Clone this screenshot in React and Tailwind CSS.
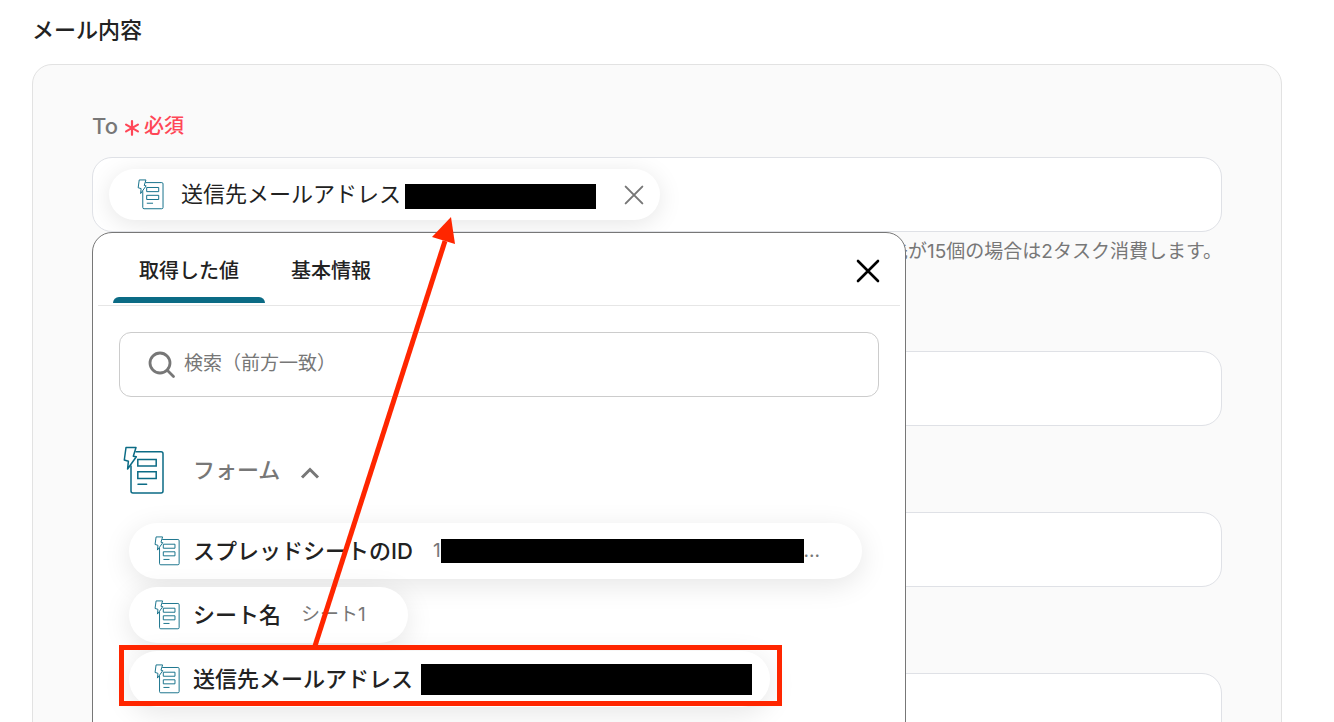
import clsx from 'clsx'

const items = [
  { name: 'スプレッドシートのID', value: '1', mask: 'w-[363px] h-6', tail: '...' },
  { name: 'シート名', value: 'シート1' },
  { name: '送信先メールアドレス', mask: 'w-[331px] h-[31px]', marked: true },
]

const otherFields = ['Cc', 'Bcc', '件名']

function FormIcon({ className, strokeWidth = 1.5 }) {
  return (
    <svg
      viewBox="0 0 42 49"
      className={clsx('shrink-0 text-[#0b6b85]', className)}
      fill="none"
      stroke="currentColor"
      strokeWidth={strokeWidth}
      strokeLinejoin="round"
      strokeLinecap="round"
      aria-hidden="true"
    >
      <path d="M13 5.7H38a2 2 0 0 1 2 2V45a2 2 0 0 1-2 2H10a2 2 0 0 1-2-2V20" />
      <path d="M3 1.5H13L10.3 10.2L13.3 10.8L4.6 23L5.4 15.2L1.3 14Z" />
      <path d="M14.8 13.4H33.2V20H14.8Z" strokeLinejoin="miter" />
      <path d="M14.8 25.8H33.2V32.4H14.8Z" strokeLinejoin="miter" />
      <path d="M15 38.3H23.6" />
    </svg>
  )
}

function CrossIcon({ className, strokeWidth }) {
  return (
    <svg viewBox="0 0 24 24" className={className} fill="none" stroke="currentColor" strokeWidth={strokeWidth} strokeLinecap="round" aria-hidden="true">
      <path d="M2 2L22 22M22 2L2 22" />
    </svg>
  )
}

function ValueChip({ item }) {
  return (
    <li className="relative">
      <button
        type="button"
        className="flex h-14 items-center rounded-full bg-white pl-[25px] pr-[42px] shadow-[0_6px_28px_rgba(0,0,0,0.1)]"
      >
        <FormIcon className="mr-3 h-[30px] w-[27px]" />
        <span className="text-[22px] font-medium text-[#222]">{item.name}</span>
        {(item.value || item.tail) && (
          <span className="ml-5 flex items-center text-[19px] text-[#777]">
            {item.value}
            {item.mask && <span className={clsx('bg-black', item.mask)} />}
            {item.tail}
          </span>
        )}
        {item.mask && !item.value && <span className={clsx('-mr-6 ml-2 bg-black', item.mask)} />}
      </button>
      {item.marked && (
        <div className="pointer-events-none absolute -left-2.5 -top-1.5 h-[61px] w-[663px] border-5 border-[#ff2600]" />
      )}
    </li>
  )
}

function ValueMenu() {
  return (
    <div className="absolute left-0 top-full z-10 w-[814px] rounded-[20px] border border-[#777] bg-white pb-10">
      <div className="mx-[5px] flex h-[73px] items-stretch border-b border-[#e6e6e6] pl-[15px] pr-5">
        <div role="tablist" className="flex text-[20px] font-medium text-[#222]">
          <button type="button" role="tab" aria-selected="true" className="relative px-[26px] pt-1">
            取得した値
            <span className="absolute inset-x-0 bottom-0.5 h-1.5 rounded-t-md bg-[#0b6b85]" />
          </button>
          <button type="button" role="tab" aria-selected="false" className="px-[26px] pt-1">
            基本情報
          </button>
        </div>
        <button type="button" aria-label="閉じる" className="ml-auto pt-1 text-black">
          <CrossIcon className="size-6" strokeWidth={2.6} />
        </button>
      </div>

      <div className="px-[26px] pt-[26px]">
        <label className="flex h-[65px] items-center rounded-xl border border-[#ccc] pl-7 text-[#777]">
          <svg viewBox="0 0 28 28" className="mr-2 size-7 shrink-0" fill="none" stroke="currentColor" strokeWidth="2.8" strokeLinecap="round" aria-hidden="true">
            <circle cx="12" cy="12" r="10" />
            <path d="M19.5 19.5L25.5 25.5" />
          </svg>
          <input
            type="text"
            aria-label="検索"
            placeholder="検索（前方一致）"
            className="min-w-0 flex-1 text-[19px] outline-none placeholder:text-[#777]"
          />
        </label>

        <button type="button" aria-expanded="true" className="mt-[49px] flex items-center pl-1 text-[#777]">
          <FormIcon className="h-[49px] w-[42px]" />
          <span className="ml-7 text-[22px] font-medium">フォーム</span>
          <svg viewBox="0 0 20 12" className="ml-5 mt-1 h-3 w-5" fill="none" stroke="currentColor" strokeWidth="3" aria-hidden="true">
            <path d="M2 10.5L10 2.5L18 10.5" />
          </svg>
        </button>

        <ul className="mt-7 flex flex-col items-start gap-2 pl-2.5">
          {items.map((item) => (
            <ValueChip key={item.name} item={item} />
          ))}
        </ul>
      </div>

      {/* Arrow from the marked item up to the selected chip */}
      <svg viewBox="0 0 160 440" className="pointer-events-none absolute -top-4 left-[212px] h-[440px] w-40" aria-hidden="true">
        <path d="M9 432L140 24" stroke="#ff2600" strokeWidth="5" fill="none" />
        <path d="M146 0L127 20L150 27Z" fill="#ff2600" />
      </svg>
    </div>
  )
}

export default function App() {
  return (
    <main className="h-screen overflow-hidden bg-white pl-8 pr-[52px] pt-3.5 font-['Inter','Noto_Sans_CJK_JP',sans-serif]">
      <h1 className="text-[22px] font-medium leading-8 text-[#222]">メール内容</h1>

      <section className="mt-[18px] rounded-[20px] border border-[#e2e2e2] bg-[#fafafa] px-[59px] pb-16 pt-[45px]">
        <label htmlFor="to" className="flex h-8 items-center gap-1.5 text-[22px] font-medium text-[#777]">
          To
          <span className="flex items-center gap-1 text-[20px] text-[#ff4757]">
            <svg viewBox="0 0 16 16" className="mt-1 size-4" stroke="currentColor" strokeWidth="2.2" strokeLinecap="round" aria-hidden="true">
              <path d="M8 1.2V14.8M2.1 4.6L13.9 11.4M13.9 4.6L2.1 11.4" />
            </svg>
            必須
          </span>
        </label>

        <div className="relative mt-[15px]">
          <div className="flex h-[75px] items-center overflow-hidden rounded-[20px] border border-[#dfe1e6] bg-white px-4">
            <div className="flex h-[51px] items-center rounded-full bg-white pl-7 pr-4 shadow-[0_4px_24px_rgba(0,0,0,0.1)]">
              <FormIcon className="h-[31px] w-[28px]" />
              <span className="ml-4 text-[22px] text-[#222]">送信先メールアドレス</span>
              <span className="ml-1 mt-1 h-[25px] w-[191px] bg-black" />
              <button type="button" aria-label="削除" className="ml-7 text-[#777]">
                <CrossIcon className="size-5" strokeWidth={2.4} />
              </button>
            </div>
            <input id="to" type="text" className="min-w-0 flex-1 outline-none" />
          </div>
          <ValueMenu />
        </div>

        <p className="mt-1 text-right text-[19px] leading-8 text-[#777]">先が15個の場合は2タスク消費します。</p>

        <div className="mt-[83px] flex flex-col gap-[86px]">
          {otherFields.map((name) => (
            <input
              key={name}
              type="text"
              aria-label={name}
              className="h-[75px] w-full rounded-[20px] border border-[#dfe1e6] bg-white px-4 text-[22px] outline-none"
            />
          ))}
        </div>
      </section>
    </main>
  )
}
